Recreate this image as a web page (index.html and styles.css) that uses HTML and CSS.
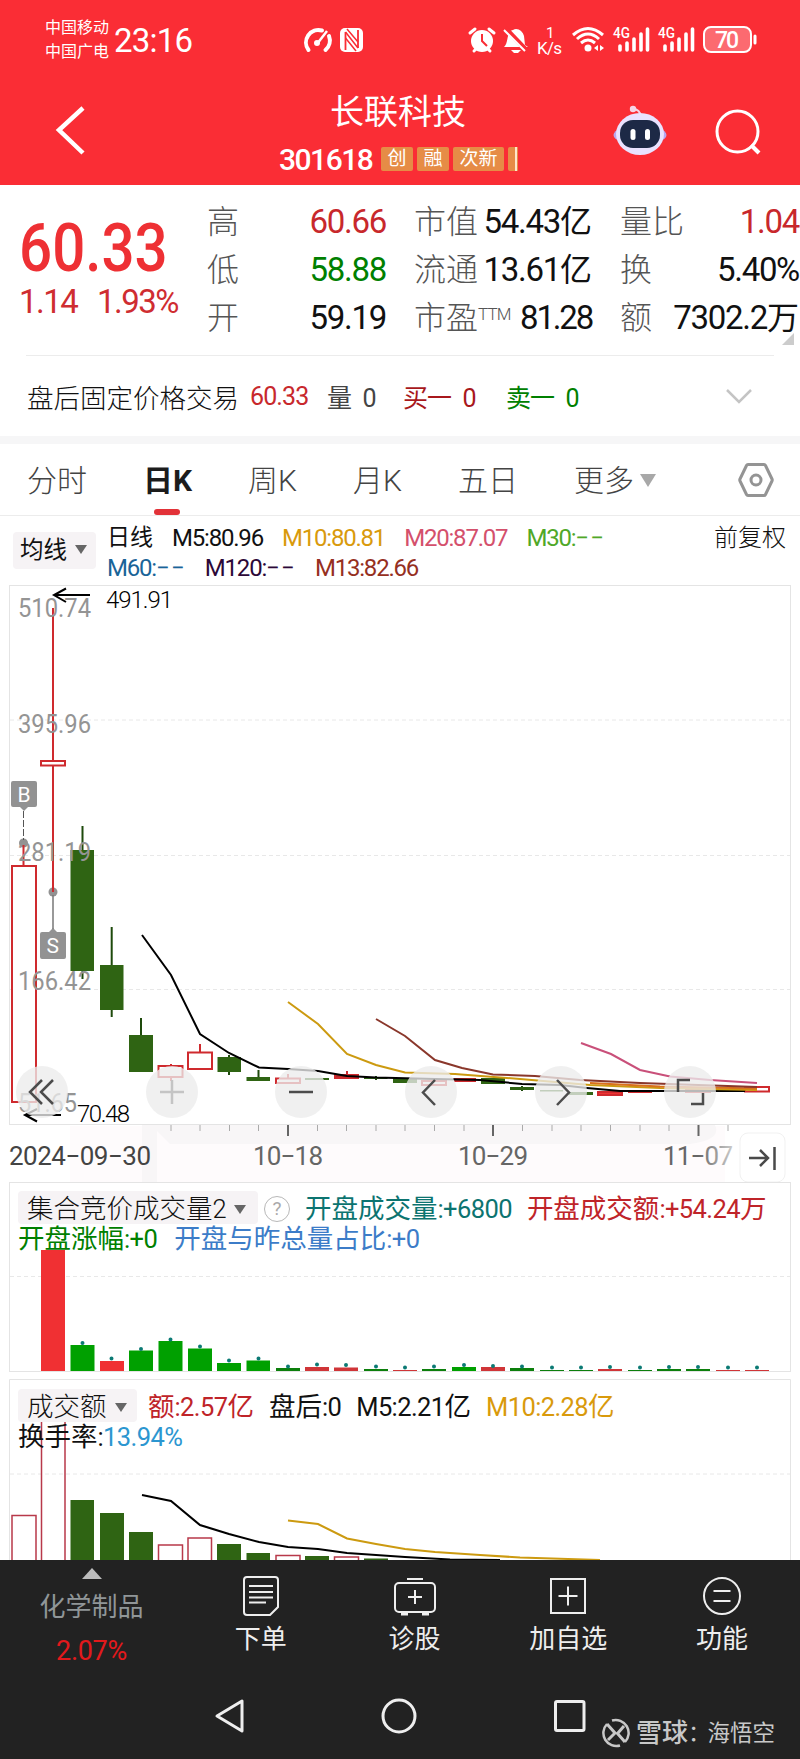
FILE: index.html
```html
<!DOCTYPE html>
<html lang="zh-CN">
<head>
<meta charset="UTF-8" />
<meta name="viewport" content="width=device-width, initial-scale=1" />
<title>长联科技 301618</title>
<link rel="stylesheet" href="styles.css">
</head>
<body>

<header class="top">
  <div class="status">
    <div class="carrier">中国移动<br>中国广电</div>
    <div class="clock">23:16</div>
    <svg class="status-mid" width="64" height="30" viewBox="300 25 64 30" fill="none" stroke="#fff" stroke-width="3">
      <path d="M307.500 50 A12.500 12.500 0 0 1 321 30.500" stroke-width="4" stroke-linecap="round" />
      <path d="M328 36 A12.500 12.500 0 0 1 324.500 50" stroke-width="4" stroke-linecap="round" />
      <path d="M326 31 L316 44" stroke-width="2.500" />
      <circle cx="316" cy="43" r="3" fill="#fff" stroke="none" />
      <rect x="339" y="28" width="23" height="24" rx="5" fill="#fff" stroke="none" />
      <path d="M344.500 50 V32 M357 48 V30" stroke="#fa2d35" stroke-width="1.800" />
      <path d="M344.500 32 L357 48 M346 29 L357 42 M344.500 38 L355 51" stroke="#fa2d35" stroke-width="1.500" />
    </svg>
    <svg class="status-right" width="292" height="34" viewBox="467 23 292 34" fill="none" stroke="#fff">
      <circle cx="482" cy="41" r="11" fill="#fff" stroke="none" />
      <path d="M470 33 L475 29 M489 29 L494 33" stroke-width="3" stroke-linecap="round" />
      <path d="M474 51 L477 48 M490 51 L487 48" stroke-width="3" stroke-linecap="round" />
      <path d="M482 34 V41 L487 46" stroke="#fa2d35" stroke-width="2" />
      <path d="M504 47 C509 43 506 31 513 30 C517 27 523 31 524 36 L525 45 L528 47 Z" fill="#fff" stroke="none" />
      <path d="M511 50 H521 L518 53 H514 Z" fill="#fff" stroke="none" />
      <path d="M505 28 L527 51" stroke="#fa2d35" stroke-width="5" />
      <path d="M504 30 L525 51" stroke-width="2" />
      <text class="svg-txt" x="546" y="38" font-size="15">1</text>
      <text class="svg-txt" x="537" y="54" font-size="17" textLength="25">K/s</text>
      <path d="M573 35 Q588 22 603 35" stroke-width="3" />
      <path d="M577 39 Q588 29 599 39" stroke-width="3" />
      <path d="M581 43 Q588 37 595 43" stroke-width="3" />
      <circle cx="588" cy="48" r="3.500" fill="#fff" stroke="none" />
      <path d="M598 45 V51 L594 48 Z M600 45 V51 L604 48 Z" fill="#fff" stroke="none" />
      <text class="svg-txt bold" x="613" y="38" font-size="15" textLength="17" lengthAdjust="spacingAndGlyphs">4G</text>
      <path d="M620 46 V50 M627 43 V50 M634 39 V50 M641 34 V50 M647.500 29 V50" stroke-width="3.600" stroke-linecap="round" />
      <text class="svg-txt bold" x="658" y="38" font-size="15" textLength="17" lengthAdjust="spacingAndGlyphs">4G</text>
      <path d="M665 46 V50 M672 43 V50 M679 39 V50 M686 34 V50 M692.500 29 V50" stroke-width="3.600" stroke-linecap="round" />
      <rect x="704" y="27" width="47" height="25" rx="7" fill="#fc6a70" stroke-width="2" />
      <path d="M755 36 V43" stroke-width="3" stroke-linecap="round" />
      <text class="svg-txt bold" x="715" y="48" font-size="23" textLength="24">70</text>
    </svg>
  </div>

  <div class="title-bar">
    <svg class="back" width="32" height="50" viewBox="0 0 32 50" fill="none" stroke="#fff" stroke-width="4.500">
      <path d="M28 3 L4 25 L28 48" />
    </svg>
    <div class="title">
      <div class="name">长联科技</div>
      <div class="code"><b>301618</b><i>创</i><i>融</i><i>次新</i><i class="cut"></i></div>
    </div>
    <svg class="robot" width="54" height="50" viewBox="613 105 54 50">
      <path d="M641 117 Q640 109 633 109" fill="none" stroke="#f6d4e6" stroke-width="2" />
      <circle cx="633" cy="109" r="3.200" fill="#f6d4e6" />
      <ellipse cx="640" cy="135" rx="26.500" ry="10" fill="#b9a6f0" />
      <ellipse cx="640" cy="134" rx="24" ry="21" fill="#e9e2ff" />
      <rect x="620" y="120" width="40" height="28" rx="13" fill="#1d2946" />
      <rect x="630.500" y="129" width="5" height="11" rx="2.500" fill="#fff" />
      <rect x="645" y="129" width="5" height="11" rx="2.500" fill="#fff" />
    </svg>
    <svg class="search" width="50" height="50" viewBox="713 107 50 50" fill="none" stroke="#fff" stroke-width="3">
      <circle cx="737.500" cy="131.500" r="20.500" />
      <path d="M751 145 L759 153" stroke-width="4" />
    </svg>
  </div>
</header>

<section class="quote">
  <div class="price">
    <div class="last">60.33</div>
    <div class="change"><span>1.14</span><span>1.93%</span></div>
  </div>
  <div class="stats">
    <div><label>高</label><span class="red">60.66</span></div>
    <div><label>市值</label><span>54.43<em>亿</em></span></div>
    <div><label>量比</label><span class="red">1.04</span></div>
    <div><label>低</label><span class="green">58.88</span></div>
    <div><label>流通</label><span>13.61<em>亿</em></span></div>
    <div><label>换</label><span>5.40%</span></div>
    <div><label>开</label><span>59.19</span></div>
    <div><label>市盈<sup>TTM</sup></label><span class="tight">81.28</span></div>
    <div><label>额</label><span>7302.2<em>万</em></span></div>
  </div>
  <div class="corner"></div>
</section>

<section class="after-hours">
  <span class="ah-title">盘后固定价格交易</span>
  <span class="ah-price red">60.33</span>
  <span class="ah-vol">量 <b>0</b></span>
  <span class="ah-buy">买一 <b>0</b></span>
  <span class="ah-sell green">卖一 <b>0</b></span>
  <svg width="26" height="16" viewBox="0 0 26 16" fill="none" stroke="#c4c4c4" stroke-width="2.500"><path d="M1 2 L13 14 L25 2" /></svg>
</section>

<nav class="tabs">
  <span>分时</span>
  <span class="active">日K</span>
  <span>周K</span>
  <span>月K</span>
  <span>五日</span>
  <span class="more">更多</span>
  <svg class="gear" width="36" height="36" viewBox="0 0 36 36" fill="none" stroke="#949494" stroke-width="3">
    <path d="M10 2.500 H26 Q27 2.500 27.500 3.500 L34 17 Q34.500 18 34 19 L27.500 32.500 Q27 33.500 26 33.500 H10 Q9 33.500 8.500 32.500 L2 19 Q1.500 18 2 17 L8.500 3.500 Q9 2.500 10 2.500 Z" />
    <circle cx="18" cy="18" r="5" />
  </svg>
</nav>

<section class="ma">
  <div class="drop ma-btn">均线</div>
  <div class="ma-lines">
    <div><span class="cn">日线</span><span>M5:80.96</span><span class="yellow">M10:80.81</span><span class="pink">M20:87.07</span><span class="lime">M30:<em>−−</em></span></div>
    <div><span class="blue">M60:<em>−−</em></span><span class="purple">M120:<em>−−</em></span><span class="brown">M13:82.66</span></div>
  </div>
  <div class="fq">前复权</div>
</section>

<svg class="kline" width="800" height="597" viewBox="0 585 800 597">
  <defs>
    <linearGradient id="fade" x1="0" y1="0" x2="1" y2="0">
      <stop offset="0.500" stop-color="#666" /><stop offset="1" stop-color="#ccc" />
    </linearGradient>
  </defs>
  <!-- background under the time axis -->
  <path d="M70 1126 H725 V1182 H70 Z" fill="#fefbfc" />
  <path d="M142 1125 H715 Q722 1140 690 1144 H170 L157 1131 V1182 H142 Z" fill="#f8f6f7" />
  <rect x="9.500" y="585.500" width="781" height="539" class="frame" />
  <path class="grid" d="M10 720 H790 M10 855.500 H790 M10 989.500 H790" />

  <!-- B / S markers -->
  <g fill="#929292">
    <path d="M12 781 H35 Q37 781 37 783 V805 Q37 807 35 807 H28 L24 811 L20 807 H13 Q11 807 11 805 V783 Q11 781 13 781 Z" />
    <circle cx="23.500" cy="843" r="4.500" />
    <circle cx="53" cy="892" r="4.500" />
    <path d="M42 932 H49 L53 928 L57 932 H64 Q66 932 66 934 V957 Q66 959 64 959 H42 Q40 959 40 957 V934 Q40 932 42 932 Z" />
  </g>
  <path d="M23.500 811 V840" stroke="#555" stroke-dasharray="7 2" />
  <path d="M53 895 V929" stroke="#777" stroke-width="1.500" />
  <text class="mark" x="17.500" y="802">B</text>
  <text class="mark" x="46.500" y="953">S</text>

  <!-- rising candles -->
  <g class="up">
    <path d="M23.500 845 V866 M53 608 V761 M53 766 V892 M171 1064 V1066 M171 1077 V1081 M200 1044 V1052 M288 1074 V1078 M347 1071 V1075" />
    <rect x="12" y="866" width="24" height="236" />
    <rect x="41" y="761" width="24" height="4.500" />
    <rect x="158.500" y="1066" width="24" height="11" />
    <rect x="188" y="1052.500" width="24" height="16.500" />
    <rect x="276" y="1078.500" width="24" height="4.500" />
    <rect x="335" y="1075" width="23" height="3" fill="#b52a2a" />
    <rect x="422" y="1081" width="24" height="4" />
    <rect x="455" y="1079" width="20" height="2" fill="#e33" />
    <rect x="598" y="1092" width="24" height="3" fill="#e33" />
    <path d="M628 1092 H652" />
    <rect x="686" y="1089" width="24" height="3" />
    <rect x="745" y="1087" width="24" height="4.500" />
  </g>
  <!-- falling candles -->
  <g class="down">
    <path d="M82.500 826 V979 M111.700 927 V1017 M141 1018 V1072 M229 1055 V1075 M258.500 1070 V1081 M376 1076 V1080 M522 1086 V1091" />
    <rect x="70.500" y="850" width="23.500" height="121" />
    <rect x="100" y="965" width="23.500" height="45" />
    <rect x="129" y="1035" width="24" height="37" />
    <rect x="217.500" y="1057" width="23.500" height="15" />
    <rect x="246.500" y="1077" width="23.500" height="4" />
    <rect x="305" y="1078" width="24" height="2" />
    <rect x="364" y="1077" width="23.500" height="2" />
    <rect x="393" y="1078" width="24" height="5" />
    <rect x="481" y="1078" width="24" height="6" />
    <rect x="510" y="1087" width="24" height="3" />
    <rect x="540" y="1090" width="23" height="1.500" />
    <rect x="569" y="1092" width="24" height="3" />
    <rect x="657" y="1090" width="24" height="2" />
    <rect x="716" y="1089" width="24" height="2" />
  </g>

  <g class="axis-num">
    <text x="18" y="617" textLength="73" lengthAdjust="spacingAndGlyphs">510.74</text>
    <text x="18" y="733" textLength="73" lengthAdjust="spacingAndGlyphs">395.96</text>
    <text x="18" y="861" textLength="73" lengthAdjust="spacingAndGlyphs">281.19</text>
    <text x="18" y="990" textLength="73" lengthAdjust="spacingAndGlyphs">166.42</text>
    <text x="18" y="1112" textLength="59" lengthAdjust="spacingAndGlyphs">51.65</text>
  </g>

  <g class="line">
    <path stroke="#000" d="M142 935 L171 975 L200 1034 L229 1053 L259 1067.500 L288 1069 L318 1071 L347 1076 L376 1077.500 L435 1079 L480 1080 L522 1084 L560 1085 L587 1088 L620 1091 L745 1091" />
    <path stroke="#cc9a10" d="M288 1002 L318 1024 L347 1054 L376 1065 L405 1072.500 L455 1074 L520 1079 L590 1085 L660 1088 L757 1090" />
    <path stroke="#d9701c" d="M590 1083 L660 1086.500 L757 1088.500" />
    <path stroke="#8a372b" d="M376 1019 L405 1036 L435 1060 L462 1068 L493 1074.500 L535 1076 L580 1080 L640 1083 L757 1087" />
    <path stroke="#c9507a" d="M581 1043 L611 1054 L640 1070 L670 1076.500 L710 1080 L757 1083" />
  </g>

  <g class="arrow">
    <path d="M90 595 H54 M66 588.500 L54 595 L66 602" />
    <path d="M61 1115 H25 M37 1109 L25 1115 L37 1121.500" />
  </g>
  <text class="peak" x="106" y="608" textLength="67">491.91</text>
  <text class="peak" x="77" y="1122" textLength="53">70.48</text>

  <!-- round chart controls -->
  <g class="ctl-bg">
    <circle cx="42" cy="1092" r="26" /><circle cx="172" cy="1092" r="26" /><circle cx="301" cy="1092" r="26" />
    <circle cx="431" cy="1092" r="26" /><circle cx="561" cy="1092" r="26" /><circle cx="690" cy="1092" r="26" />
  </g>
  <g class="ctl">
    <path d="M42 1080 L30 1092 L42 1104 M53 1080 L41 1092 L53 1104" />
    <path d="M172 1080 V1104 M160 1092 H184" stroke="#c4c4c4" />
    <path d="M289 1092 H313" />
    <path d="M435 1080 L423 1092.500 L435 1105" />
    <path d="M557 1080 L569 1092.500 L557 1105" />
    <path d="M690 1080 H678 V1092 M691 1104 H703 V1093" />
  </g>

  <path stroke="#aaa" d="M171 1125 V1131 M200 1125 V1131 M229.500 1125 V1131 M258.500 1125 V1131 M317.500 1125 V1131 M346.500 1125 V1131 M376 1125 V1131 M405 1125 V1131 M434.500 1125 V1131 M464 1125 V1131 M522.500 1125 V1131 M552 1125 V1131 M581 1125 V1131 M610.500 1125 V1131 M640 1125 V1131 M669 1125 V1131 M728 1125 V1131" />
  <path stroke="#666" stroke-width="2" d="M288 1125 V1136 M493 1125 V1136 M698.500 1125 V1136" />
  <g class="date">
    <text x="9" y="1165" textLength="142" fill="#444">2024−09−30</text>
    <text x="253" y="1165" textLength="70">10−18</text>
    <text x="458" y="1165" textLength="70">10−29</text>
    <text x="663" y="1165" textLength="70" fill="url(#fade)">11−07</text>
  </g>
  <rect x="740" y="1133" width="45" height="49" rx="8" fill="#fff" stroke="#f1f1f1" />
  <path d="M749 1158 H768 M760 1150 L768 1158 L760 1166 M774.500 1147 V1170" fill="none" stroke="#4a4a4a" stroke-width="2.500" />
</svg>

<section class="panel auction">
  <svg class="bars" width="800" height="190" viewBox="0 1182 800 190">
    <rect x="9.500" y="1182.500" width="781" height="189" class="frame" />
    <path class="grid" d="M10 1276.500 H790" />
    <path fill="#f03033" d="M41 1371 V1250 H65 V1371 Z M100 1371 V1361 H124 V1371 Z" />
    <path fill="#d03538" d="M305 1371 V1367 H329 V1371 Z M334 1371 V1367.500 H358 V1371 Z M481 1371 V1367 H505 V1371 Z M393 1371 V1370 H417 V1371 Z M598 1371 V1369 H622 V1371 Z M716 1371 V1370 H740 V1371 Z M745 1371 V1370 H769 V1371 Z" />
    <path fill="#00a000" d="M70.500 1371 V1345 H94.500 V1371 Z M129 1371 V1350.500 H153 V1371 Z M158.500 1371 V1341 H182.500 V1371 Z M188 1371 V1348.500 H212 V1371 Z M217 1371 V1363 H241 V1371 Z M246.500 1371 V1360.500 H270 V1371 Z M452 1371 V1367 H476 V1371 Z" />
    <path fill="#0c7f0c" d="M276 1371 V1368 H300 V1371 Z M364 1371 V1369 H388 V1371 Z M422 1371 V1369 H446 V1371 Z M510 1371 V1368 H534 V1371 Z M540 1371 V1370 H564 V1371 Z M569 1371 V1370 H593 V1371 Z M628 1371 V1370 H652 V1371 Z M657 1371 V1369 H681 V1371 Z M686 1371 V1369 H710 V1371 Z" />
    <path class="dots" d="M82.500 1343h0 M111.500 1358.500h0 M141 1349h0 M170.500 1339.500h0 M200 1346.500h0 M229 1360.500h0 M258.500 1358.500h0 M288 1366.500h0 M317 1364.500h0 M346 1365h0 M376 1366.500h0 M405 1367.500h0 M434 1366.500h0 M464 1365h0 M493 1366h0 M522 1366.500h0 M552 1367.500h0 M581 1367.500h0 M610 1367h0 M640 1367.500h0 M669 1367h0 M698 1367h0 M728 1367.500h0 M757 1367.500h0" />
  </svg>
  <div class="legend">
    <div class="drop">集合竞价成交量<span>2</span></div>
    <div class="help">?</div>
    <div class="teal">开盘成交量<span>:+6800</span></div>
    <div class="crimson">开盘成交额<span>:+54.24</span>万</div>
  </div>
  <div class="legend second">
    <div class="green">开盘涨幅<span>:+0</span></div>
    <div class="sky">开盘与昨总量占比<span>:+0</span></div>
  </div>
</section>

<section class="panel turnover">
  <svg class="bars" width="800" height="181" viewBox="0 1379 800 181">
    <path d="M9.500 1560 V1379.500 H790.500 V1560" class="frame" />
    <path class="grid" d="M10 1474 H790" />
    <path fill="#fff" stroke="#b8394a" stroke-width="1.500" d="M12 1565 V1515.500 H36 V1565 M41.500 1565 V1410 M65 1410 V1565 M158.500 1565 V1545 H182.500 V1565 M188 1565 V1538 H211.500 V1565 M276 1565 V1555.500 H300 V1565 M334.500 1565 V1557 H358.500 V1565" />
    <path fill="#2f6413" d="M70.500 1560 V1500 H94 V1560 Z M100 1560 V1513 H124 V1560 Z M129 1560 V1532 H153 V1560 Z M217 1560 V1544 H241 V1560 Z M246.500 1560 V1553 H270 V1560 Z M305 1560 V1556 H329 V1560 Z M364 1560 V1558.500 H388 V1560 Z" />
    <g class="line">
      <path stroke="#000" d="M142 1495 L171 1501 L200 1525 L229 1534 L259 1542 L288 1547 L318 1549 L347 1553 L376 1555 L405 1557 L450 1559.500 L500 1560" />
      <path stroke="#cc9a10" d="M288 1520.500 L318 1524 L347 1538.500 L376 1544 L405 1549 L435 1552 L480 1555 L520 1557.500 L600 1560" />
    </g>
  </svg>
  <div class="legend">
    <div class="drop">成交额</div>
    <div class="crimson">额<span>:2.57</span>亿</div>
    <div>盘后<span>:0</span></div>
    <div><span>M5:2.21</span>亿</div>
    <div class="yellow"><span>M10:2.28</span>亿</div>
  </div>
  <div class="legend second">
    <div>换手率<span>:</span><span class="cyan">13.94%</span></div>
  </div>
</section>

<footer class="bottom">
  <div class="menu">
    <div class="sector">
      <svg width="20" height="11" viewBox="0 0 20 11"><path d="M10 0 L20 11 H0 Z" fill="#bdbdbd" /></svg>
      <p>化学制品</p>
      <b>2.07%</b>
    </div>
    <div class="item">
      <svg width="40" height="40" viewBox="0 0 40 40">
        <path d="M6 1 H34 Q37 1 37 4 V31 L29 39 H6 Q3 39 3 36 V4 Q3 1 6 1 Z M8 10 H32 M8 16 H32 M8 21.500 H32 M8 26.500 H25" />
      </svg>
      <p>下单</p>
    </div>
    <div class="item">
      <svg width="42" height="40" viewBox="0 0 42 40">
        <rect x="1" y="7" width="40" height="29" rx="4" />
        <path d="M13 3 H29 M21 14 V28 M14 21 H28" />
        <path d="M7 38 H14 M28 38 H35" stroke-width="3" />
      </svg>
      <p>诊股</p>
    </div>
    <div class="item">
      <svg width="40" height="40" viewBox="0 0 40 40">
        <rect x="3" y="3" width="34" height="34" />
        <path d="M20 10.500 V29.500 M10.500 20 H29.500" />
      </svg>
      <p>加自选</p>
    </div>
    <div class="item">
      <svg width="40" height="40" viewBox="0 0 40 40">
        <circle cx="20" cy="20" r="18" />
        <path d="M11.500 15 H28.500 M11.500 25 H28.500" />
      </svg>
      <p>功能</p>
    </div>
  </div>
  <div class="sysnav">
    <svg width="32" height="36" viewBox="0 0 32 36"><path d="M28 3 V33 L3 18 Z" /></svg>
    <svg width="36" height="36" viewBox="0 0 36 36"><circle cx="18" cy="18" r="16" /></svg>
    <svg width="36" height="36" viewBox="0 0 36 36"><rect x="3.500" y="3.500" width="28.500" height="29" rx="1.500" /></svg>
  </div>
  <div class="watermark">
    <svg width="30" height="30" viewBox="0 0 30 30" fill="none" stroke="#c8c8c8" stroke-width="2.500">
      <path d="M11 2.500 A13 13 0 0 1 24 24 M19 27.500 A13 13 0 0 1 6 6" />
      <path d="M6 6 L14 15 L7 22 M24 24 L16.500 15.500 L23 8" stroke-width="3" />
    </svg>
    <b>雪球</b><span>：</span><span>海悟空</span>
  </div>
</footer>

</body>
</html>
```
FILE: styles.css
```css
* {
  box-sizing: border-box;
}
body {
  margin: 0;
  width: 800px;
  height: 1759px;
  overflow: hidden;
  background: #fff;
  color: #111;
  font-family: Roboto, "Noto Sans CJK SC", sans-serif;
  font-weight: 400;
}
p {
  margin: 0;
}
i, em {
  font-style: normal;
}
.red { color: #c8282c; }
.green { color: #008000; }
.yellow { color: #d99a0c; }
.pink { color: #d4506c; }
.lime { color: #50a828; }
.blue { color: #1a6498; }
.purple { color: #2c0838; }
.brown { color: #96301f; }
.teal { color: #0c7470; }
.crimson { color: #bf2429; }
.sky { color: #3c7cc8; }
.cyan { color: #2c96d0; }

/* header */
.top {
  height: 185px;
  background: #fa2d35;
  color: #fff;
}
.status {
  display: flex;
  align-items: center;
  height: 80px;
  padding-left: 45px;
}
.carrier {
  width: 69px;
  font-size: 16px;
  line-height: 24px;
}
.clock {
  width: 187px;
  font-size: 33px;
  letter-spacing: -0.8px;
  line-height: 40px;
  padding-top: 2px;
}
.status-right {
  margin-left: 102px;
}
.svg-txt {
  fill: #fff;
  stroke: none;
  font-family: Roboto, sans-serif;
}
.svg-txt.bold {
  font-weight: 500;
}
.title-bar {
  display: flex;
  height: 104px;
}
.back {
  margin: 25px 0 0 55px;
}
.title {
  width: 250px;
  margin-left: 192px;
}
.name {
  height: 60px;
  padding-left: 51px;
  font-size: 34px;
  line-height: 64px;
}
.code {
  display: flex;
  align-items: center;
  height: 38px;
}
.code b {
  width: 102px;
  font-size: 30px;
  font-weight: 500;
  letter-spacing: -1.5px;
}
.code i {
  margin-right: 4px;
  padding: 0 6.5px;
  background: #e68c46;
  border-radius: 2px;
  font-size: 19px;
  line-height: 24px;
}
.code .cut {
  width: 10px;
  height: 24px;
  padding: 0;
  border-radius: 2px 0 0 2px;
  background: linear-gradient(90deg, #e68c46 7px, #ffe6cc 7px, #ffe6cc 9px, #e68c46 9px);
}
.robot {
  margin: 25px 0 0 84px;
}
.search {
  margin: 27px 0 0 46px;
}

/* quote */
.quote {
  position: relative;
  display: flex;
  height: 171px;
  padding: 13px 0 0 19px;
}
.quote::after {
  content: "";
  position: absolute;
  left: 26px;
  right: 26px;
  bottom: 0;
  height: 1px;
  background: #ececec;
}
.price {
  width: 188px;
  color: #ee3034;
}
.last {
  height: 80px;
  padding-top: 12px;
  font-size: 67px;
  font-weight: 500;
  line-height: 76px;
  transform: scaleX(0.87);
  transform-origin: left;
}
.change {
  height: 44px;
  color: #cf2d31;
  font-size: 33px;
  line-height: 48px;
  letter-spacing: -1.5px;
}
.change span:first-child {
  display: inline-block;
  width: 78px;
}
.stats {
  display: grid;
  grid-template-columns: 179px 178px 179px;
  grid-auto-rows: 48px;
  column-gap: 28px;
}
.stats div {
  display: flex;
  justify-content: space-between;
  line-height: 48px;
  white-space: nowrap;
}
.stats label {
  color: #555;
  font-size: 32px;
  font-weight: 300;
}
.stats span {
  font-size: 33px;
  letter-spacing: -1.3px;
}
.stats .tight {
  letter-spacing: -2.2px;
}
.stats em {
  font-size: 32px;
  letter-spacing: 0;
}
.stats sup {
  font-size: 17px;
  line-height: 0;
  vertical-align: 9px;
  letter-spacing: -0.8px;
}
.corner {
  position: absolute;
  right: 6px;
  bottom: 11px;
  border-left: 12px solid transparent;
  border-bottom: 12px solid #ccc;
}

.after-hours {
  display: flex;
  align-items: center;
  height: 80px;
  padding-left: 27px;
  font-size: 25px;
  letter-spacing: -0.9px;
}
.after-hours b {
  margin-left: 6px;
  font-weight: 400;
}
.ah-title {
  width: 223px;
  font-size: 26.5px;
  font-weight: 300;
  letter-spacing: 0;
}
.ah-price { width: 77px; }
.ah-vol { width: 76px; color: #444; }
.ah-buy { width: 103px; color: #a8181c; }
.ah-sell { width: 220px; }

/* period tabs */
.tabs {
  display: flex;
  gap: 56px;
  height: 80px;
  padding-left: 27px;
  border-top: 8px solid #f6f6f7;
  border-bottom: 1px solid #ececec;
  color: #444;
  font-size: 30px;
  font-weight: 300;
  line-height: 73px;
}
.tabs .active {
  position: relative;
  color: #1c1c1c;
  font-weight: 700;
}
.tabs .active::after {
  content: "";
  position: absolute;
  left: 11px;
  bottom: 0;
  width: 26px;
  height: 6px;
  border-radius: 3px;
  background: #e23238;
}
.more::after {
  content: "";
  display: inline-block;
  margin-left: 6px;
  border: 8px solid transparent;
  border-top: 13px solid #a8a8a8;
  border-bottom: 0;
  vertical-align: 4px;
}
.gear {
  margin: 18px 0 0 26px;
}

.drop {
  background: #f6f3f5;
  border-radius: 4px;
  color: #111;
}
.drop::after {
  content: "";
  display: inline-block;
  margin-left: 8px;
  border: 6.5px solid transparent;
  border-top: 9px solid #666;
  border-bottom: 0;
  vertical-align: 4px;
}
.ma {
  display: flex;
  height: 69px;
  padding: 0 14px 0 13px;
  font-size: 24px;
}
.ma-btn {
  width: 83px;
  height: 37px;
  margin-top: 16px;
  padding-left: 7px;
  font-size: 23.5px;
  line-height: 37px;
}
.ma-lines {
  flex: 1;
  margin-left: 11px;
  padding-top: 6px;
}
.ma-lines div {
  display: flex;
  gap: 19px;
  height: 30px;
  line-height: 32px;
  letter-spacing: -1.2px;
}
.ma-lines em {
  letter-spacing: 1.2px;
}
.ma-lines .cn {
  font-size: 23px;
  letter-spacing: 0;
}
.fq {
  padding-top: 6px;
  font-weight: 300;
  line-height: 32px;
}

/* charts */
.kline {
  display: block;
  font-family: Roboto, sans-serif;
}
.frame {
  fill: none;
  stroke: #e4e4e4;
}
.grid {
  stroke: #e8e8e8;
  stroke-dasharray: 4 3;
}
.up {
  fill: #fff;
  stroke: #cf2a2e;
  stroke-width: 2;
}
.down {
  fill: #2f6413;
}
.down path {
  stroke: #1e4a0c;
  stroke-width: 2;
}
.line {
  fill: none;
  stroke-width: 2;
}
.mark {
  fill: #fff;
  font-size: 21px;
}
.axis-num {
  fill: #949494;
  font-size: 26px;
}
.arrow {
  fill: none;
  stroke: #000;
  stroke-width: 2;
}
.peak {
  font-size: 24px;
  font-weight: 300;
}
.ctl-bg {
  fill: #ececec;
  fill-opacity: 0.78;
}
.ctl {
  fill: none;
  stroke: #4c4c4c;
  stroke-width: 2.500;
}
.date {
  fill: #666;
  font-size: 26px;
}

.panel {
  position: relative;
  height: 189px;
  margin-bottom: 8px;
  padding: 9px 0 0 18px;
}
.turnover {
  height: 181px;
  margin-bottom: 0;
  padding-top: 10px;
}
.bars {
  position: absolute;
  left: 0;
  top: 0;
}
.dots {
  fill: none;
  stroke: #0b7a74;
  stroke-width: 4;
  stroke-linecap: round;
}
.legend {
  position: relative;
  display: flex;
  gap: 15px;
  height: 34px;
  font-size: 26.5px;
  line-height: 36px;
  white-space: nowrap;
}
.legend span {
  font-size: 25.5px;
  letter-spacing: -0.6px;
}
.legend .drop {
  height: 33px;
  padding: 0 9px;
  font-weight: 300;
}
.auction .drop {
  width: 240px;
  margin-right: -9px;
}
.turnover .drop {
  width: 119px;
  margin-right: -4px;
}
.legend.second {
  height: 28px;
  line-height: 28px;
}
.auction .second {
  gap: 17px;
}
.help {
  width: 26px;
  height: 26px;
  margin-top: 5px;
  border: 1.5px solid #b8b8b8;
  border-radius: 50%;
  color: #aaa;
  font-size: 19px;
  line-height: 24px;
  text-align: center;
}

/* bottom bar */
.bottom {
  position: relative;
  height: 199px;
  background: #222;
  color: #eee;
}
.menu {
  display: flex;
  height: 130px;
  text-align: center;
  font-size: 26px;
  line-height: 38px;
}
.sector {
  width: 183px;
  margin-right: 1px;
  padding-top: 8px;
  color: #909698;
}
.sector svg {
  display: block;
  margin: 0 auto 9px;
}
.sector b {
  display: block;
  padding-top: 6px;
  color: #e3191c;
  font-size: 27px;
  font-weight: 400;
  letter-spacing: -0.3px;
}
.item {
  width: 153.700px;
  padding-top: 16px;
}
.item svg {
  display: block;
  margin: 0 auto 4px;
  fill: none;
  stroke: #eee;
  stroke-width: 2;
}
.sysnav {
  display: flex;
  gap: 135px;
  padding: 8px 0 0 214px;
}
.sysnav svg {
  fill: none;
  stroke: #eee;
  stroke-width: 3;
  stroke-linejoin: round;
}
.watermark {
  position: absolute;
  left: 601px;
  bottom: 10px;
  display: flex;
  align-items: center;
  color: #c8c8c8;
  font-size: 22.500px;
  line-height: 32px;
}
.watermark b {
  margin-left: 5px;
  font-size: 26px;
  font-weight: 500;
}
.watermark span:last-child {
  margin-left: -3px;
}
```
